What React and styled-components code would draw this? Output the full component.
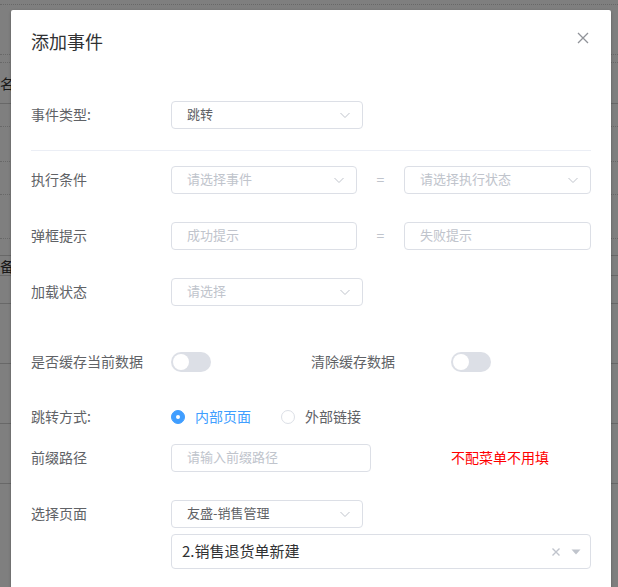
import React from 'react';
import styled, { createGlobalStyle } from 'styled-components';

const GlobalStyle = createGlobalStyle`
  html, body { margin: 0; padding: 0; }
  body {
    font-family: "Noto Sans CJK SC", "Noto Sans", sans-serif;
    background: #fff;
    overflow: hidden;
  }
`;

const Page = styled.div`
  position: relative;
  width: 618px;
  height: 587px;
  overflow: hidden;
  background: #fff;
`;

const BgTable = styled.div`
  display: flex;
  flex-direction: column;
`;

const BgRow = styled.div`
  box-sizing: border-box;
  height: ${p => p.h}px;
  border-bottom: 1px ${p => (p.dotted ? 'dotted' : 'solid')} #d0d0d0;
  font-size: 14px;
  line-height: ${p => p.h}px;
  color: #333;
  white-space: nowrap;
`;

const Mask = styled.div`
  position: absolute;
  inset: 0;
  background: rgba(0, 0, 0, 0.5);
`;

const Dialog = styled.div`
  position: absolute;
  left: 11px;
  top: 10px;
  width: 600px;
  height: 620px;
  background: #fff;
  border-radius: 2px;
  box-shadow: 0 1px 3px rgba(0, 0, 0, 0.3);
  line-height: 1;
`;

const Header = styled.div`
  position: relative;
  padding: 20px 20px 10px;
`;

const Title = styled.div`
  font-size: 18px;
  height: 24px;
  color: #303133;
  display: flex;
  align-items: center;
  padding-bottom: 3px;
  box-sizing: border-box;
`;

const Close = styled.button`
  position: absolute;
  top: 20px;
  right: 20px;
  width: 16px;
  height: 16px;
  padding: 0;
  border: none;
  background: none;
  display: flex;
  align-items: center;
  justify-content: center;
`;

const Body = styled.div`
  padding: 0 20px;
  display: flex;
  flex-direction: column;
`;

const Row = styled.div`
  display: flex;
  align-items: center;
  height: ${p => p.h || 28}px;
  margin-top: ${p => p.mt || 0}px;
`;

const Label = styled.div`
  width: 140px;
  flex-shrink: 0;
  font-size: 14px;
  color: #606266;
  padding-bottom: 3px;
`;

const Box = styled.div`
  box-sizing: border-box;
  width: ${p => p.w}px;
  height: ${p => p.h || 28}px;
  border: 1px solid #dcdfe6;
  border-radius: 4px;
  background: #fff;
  display: flex;
  align-items: center;
  padding: 0 ${p => p.pr || 15}px 0 ${p => (p.big ? 10 : 15)}px;
  font-size: ${p => (p.big ? 15 : 13)}px;
  color: ${p => (p.placeholder ? '#c0c4cc' : p.big ? '#303133' : '#606266')};
  flex-shrink: 0;
`;

const BoxText = styled.span`
  flex: 1;
  white-space: nowrap;
  padding-bottom: 3px;
`;

const Eq = styled.div`
  width: 47px;
  text-align: center;
  font-size: 14px;
  color: #c0c4cc;
  padding-bottom: 3px;
`;

const Switch = styled.div`
  position: relative;
  width: 40px;
  height: 20px;
  border-radius: 10px;
  background: #dcdfe6;
  flex-shrink: 0;
  &::after {
    content: '';
    position: absolute;
    top: 2px;
    left: 2px;
    width: 16px;
    height: 16px;
    border-radius: 50%;
    background: #fff;
  }
`;

const SwitchGroup = styled.div`
  display: flex;
  align-items: center;
  width: 140px;
`;

const InlineLabel = styled.div`
  width: 140px;
  font-size: 14px;
  color: #606266;
  padding-bottom: 3px;
`;

const Radio = styled.label`
  display: flex;
  align-items: center;
  margin-right: ${p => p.mr || 0}px;
  font-size: 14px;
  color: ${p => (p.checked ? '#409eff' : '#606266')};
`;

const RadioText = styled.span`
  padding-bottom: 3px;
`;

const Dot = styled.span`
  box-sizing: border-box;
  width: 14px;
  height: 14px;
  border-radius: 50%;
  margin-right: 10px;
  border: 1px solid ${p => (p.checked ? '#409eff' : '#dcdfe6')};
  background: ${p => (p.checked ? '#409eff' : '#fff')};
  display: flex;
  align-items: center;
  justify-content: center;
  &::after {
    content: '';
    width: 4px;
    height: 4px;
    border-radius: 50%;
    background: ${p => (p.checked ? '#fff' : 'transparent')};
  }
`;

const Hint = styled.div`
  margin-left: 80px;
  font-size: 14px;
  color: #ff0000;
  padding-bottom: 3px;
`;

const Divider = styled.div`
  height: 1px;
  background: #ebeef5;
  margin-top: 21px;
`;

const Chevron = () => (
  <svg width="14" height="14" viewBox="0 0 14 14">
    <path d="M2.5 5 L7 9.5 L11.5 5" fill="none" stroke="#c0c4cc" strokeWidth="1" />
  </svg>
);

const Select = ({ w, value, placeholder }) => (
  <Box w={w} pr={10} placeholder={!value ? 1 : 0}>
    <BoxText>{value || placeholder}</BoxText>
    <Chevron />
  </Box>
);

const Input = ({ w, placeholder }) => (
  <Box w={w} placeholder={1}>
    <BoxText>{placeholder}</BoxText>
  </Box>
);

export default function App() {
  return (
    <Page>
      <GlobalStyle />
      <BgTable>
        <BgRow h={5} dotted />
        <BgRow h={50} dotted />
        <BgRow h={8} dotted />
        <BgRow h={41}>名称</BgRow>
        <BgRow h={23} dotted />
        <BgRow h={35} dotted />
        <BgRow h={33} dotted />
        <BgRow h={44} dotted />
        <BgRow h={17} />
        <BgRow h={20}>备日</BgRow>
        <BgRow h={28} />
        <BgRow h={60} />
        <BgRow h={60} />
        <BgRow h={60} />
      </BgTable>
      <Mask />
      <Dialog>
        <Header>
          <Title>添加事件</Title>
          <Close>
            <svg width="12" height="12" viewBox="0 0 12 12">
              <path d="M1 1 L11 11 M11 1 L1 11" stroke="#909399" strokeWidth="1.3" />
            </svg>
          </Close>
        </Header>
        <Body>
          <Row mt={37}>
            <Label>事件类型:</Label>
            <Select w={192} value="跳转" />
          </Row>
          <Divider />
          <Row mt={15}>
            <Label>执行条件</Label>
            <Select w={186} placeholder="请选择事件" />
            <Eq>=</Eq>
            <Select w={187} placeholder="请选择执行状态" />
          </Row>
          <Row mt={28}>
            <Label>弹框提示</Label>
            <Input w={186} placeholder="成功提示" />
            <Eq>=</Eq>
            <Input w={187} placeholder="失败提示" />
          </Row>
          <Row mt={28}>
            <Label>加载状态</Label>
            <Select w={192} placeholder="请选择" />
          </Row>
          <Row mt={42}>
            <Label>是否缓存当前数据</Label>
            <SwitchGroup>
              <Switch />
            </SwitchGroup>
            <InlineLabel>清除缓存数据</InlineLabel>
            <Switch />
          </Row>
          <Row mt={27}>
            <Label>跳转方式:</Label>
            <Radio checked mr={30}>
              <Dot checked />
              <RadioText>内部页面</RadioText>
            </Radio>
            <Radio>
              <Dot />
              <RadioText>外部链接</RadioText>
            </Radio>
          </Row>
          <Row mt={13}>
            <Label>前缀路径</Label>
            <Input w={200} placeholder="请输入前缀路径" />
            <Hint>不配菜单不用填</Hint>
          </Row>
          <Row mt={28}>
            <Label>选择页面</Label>
            <Select w={192} value="友盛-销售管理" />
          </Row>
          <Row mt={6} h={35}>
            <Label />
            <Box w={420} h={35} pr={8} big>
              <BoxText>2.销售退货单新建</BoxText>
              <svg width="12" height="12" viewBox="0 0 12 12" style={{ marginRight: 8 }}>
                <path d="M2.5 2.5 L9.5 9.5 M9.5 2.5 L2.5 9.5" stroke="#c0c4cc" strokeWidth="1.4" />
              </svg>
              <svg width="12" height="12" viewBox="0 0 12 12">
                <path d="M1.5 3.5 L10.5 3.5 L6 8.5 Z" fill="#c0c4cc" />
              </svg>
            </Box>
          </Row>
        </Body>
      </Dialog>
    </Page>
  );
}
